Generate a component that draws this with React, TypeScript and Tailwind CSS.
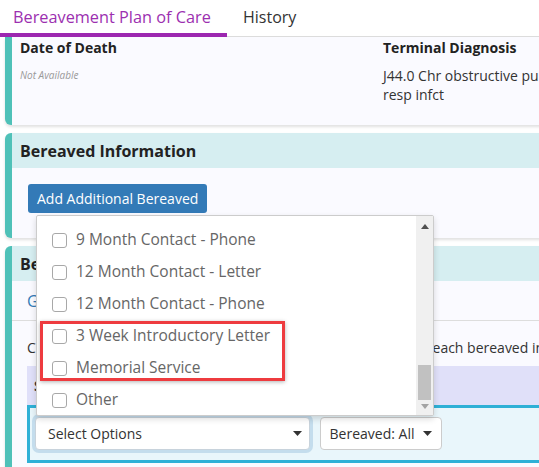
import React from "react";

const items = [
  "9 Month Contact - Phone",
  "12 Month Contact - Letter",
  "12 Month Contact - Phone",
  "3 Week Introductory Letter",
  "Memorial Service",
  "Other",
];

function Caret({ className = "" }: { className?: string }) {
  return (
    <svg width="9" height="5" viewBox="0 0 9 5" className={className}>
      <path d="M0 0 L9 0 L4.5 5 Z" fill="#333" />
    </svg>
  );
}

export default function App() {
  return (
    <div
      className="relative w-[539px] h-[467px] overflow-hidden bg-white text-[#333]"
      style={{ fontFamily: '"Open Sans", "Noto Sans", sans-serif' }}
    >
      {/* Tabs */}
      <div className="flex h-[37px] border-b border-[#ddd]">
        <div className="w-[227px] pl-[13px] text-[16.3px] leading-[34px] text-[#9c2fb0] border-b-4 border-[#9c27b0] h-[37px] whitespace-nowrap">
          Bereavement Plan of Care
        </div>
        <div className="pl-[16px] text-[16px] leading-[34px] text-[#333]">History</div>
      </div>

      <div className="pl-[5px] w-[640px] flex flex-col gap-[8px]">
        {/* Card 1 */}
        <div className="h-[88px] bg-[#fafaff] border-l-[7px] border-[#4fc1b8] rounded-bl-[6px] shadow-[0_2px_3px_rgba(0,0,0,0.12)] flex pl-[8px] pt-[1px]">
          <div className="w-[363px] shrink-0">
            <div className="text-[14px] font-bold leading-[20px] text-[#222]">Date of Death</div>
            <div className="text-[10px] italic text-[#999] mt-[10px]">Not Available</div>
          </div>
          <div className="flex-1 whitespace-nowrap">
            <div className="text-[14px] font-bold leading-[20px] text-[#222]">Terminal Diagnosis</div>
            <div className="text-[14px] leading-[19px] text-[#333] mt-[8px]">
              J44.0 Chr obstructive pulm disease w acute lower
              <br />
              resp infct
            </div>
          </div>
        </div>

        {/* Card 2 */}
        <div className="h-[105px] bg-[#fafaff] border-l-[7px] border-[#4fc1b8] rounded-l-[6px] shadow-[0_2px_3px_rgba(0,0,0,0.12)] flex flex-col">
          <div className="h-[35px] bg-[#d6eef1] pl-[8px] flex items-center text-[16px] font-bold text-[#222]">
            Bereaved Information
          </div>
          <div className="pl-[16px] pt-[16px]">
            <button className="h-[29px] px-[9px] rounded-[3px] bg-[#337ab7] text-white text-[14px] leading-[29px]">
              Add Additional Bereaved
            </button>
          </div>
        </div>

        {/* Card 3 */}
        <div className="h-[240px] bg-[#fafaff] border-l-[7px] border-[#4fc1b8] rounded-tl-[6px] shadow-[0_2px_3px_rgba(0,0,0,0.12)] flex flex-col">
          <div className="h-[35px] bg-[#d6eef1] pl-[8px] flex items-center text-[16px] font-bold text-[#222] shrink-0">
            Bereavement Contacts
          </div>
          <div className="h-[40px] border-b border-[#ddd] pl-[15px] flex items-center text-[16px] text-[#337ab7] shrink-0">
            General
          </div>
          <div className="pl-[15px] pt-[16px] text-[14px] whitespace-nowrap text-[#333] shrink-0">
            Choose the bereavement contact options to be completed for each bereaved individual
          </div>
          <div className="ml-[15px] mt-[8px] flex flex-col">
            <div className="h-[39px] bg-[#e0e0f9] pl-[7px] flex items-center text-[14px] font-bold">
              Select
            </div>
            <div className="h-[58px] bg-[#e9f6fb] border-[3px] border-[#2fb0d6] pl-[5px] pt-[9px] flex gap-[10px]">
              <div className="w-[275px] h-[33px] bg-white border border-[#c8d3dc] rounded-[4px] shadow-[0_0_0_3px_rgba(150,190,220,0.45)] flex items-center justify-between pl-[12px] pr-[7px]">
                <span className="text-[14px] text-[#333]">Select Options</span>
                <Caret />
              </div>
              <div className="w-[122px] h-[33px] bg-white border border-[#ccc] rounded-[4px] flex items-center justify-center gap-[9px] text-[14px] text-[#333]">
                <span>Bereaved: All</span>
                <Caret />
              </div>
            </div>
          </div>
        </div>
      </div>

      {/* Dropdown menu */}
      <div className="absolute left-[36px] top-[215px] w-[398px] h-[201px] bg-white border border-[#ccc] rounded-[2px] shadow-[0_3px_6px_rgba(0,0,0,0.15)] flex overflow-hidden">
        <div className="flex-1 pt-[8px] flex flex-col">
          {items.map((t) => (
            <div key={t} className="h-[32px] flex items-center pl-[15px] gap-[9px] shrink-0">
              <span className="w-[15px] h-[15px] rounded-[3px] border border-[#a8a8a8] bg-white shrink-0" />
              <span className="text-[15.5px] text-[#666] whitespace-nowrap">{t}</span>
            </div>
          ))}
        </div>
        <div className="w-[17px] bg-[#f0f0f0] relative flex flex-col items-center">
          <svg width="8" height="5" viewBox="0 0 8 5" className="mt-[8px]">
            <path d="M0 5 L8 5 L4 0 Z" fill="#505050" />
          </svg>
          <div className="absolute left-[2px] top-[149px] w-[13px] h-[35px] bg-[#c1c1c1]" />
          <svg width="8" height="5" viewBox="0 0 8 5" className="absolute bottom-[6px] left-[4.5px]">
            <path d="M0 0 L8 0 L4 5 Z" fill="#a3a3a3" />
          </svg>
        </div>
      </div>

      {/* Red highlight annotation */}
      <div className="absolute left-[40px] top-[321px] w-[245px] h-[60px] border-[3px] border-[#ee3b3f] shadow-[0_1px_4px_rgba(0,0,0,0.3)]" />
    </div>
  );
}
